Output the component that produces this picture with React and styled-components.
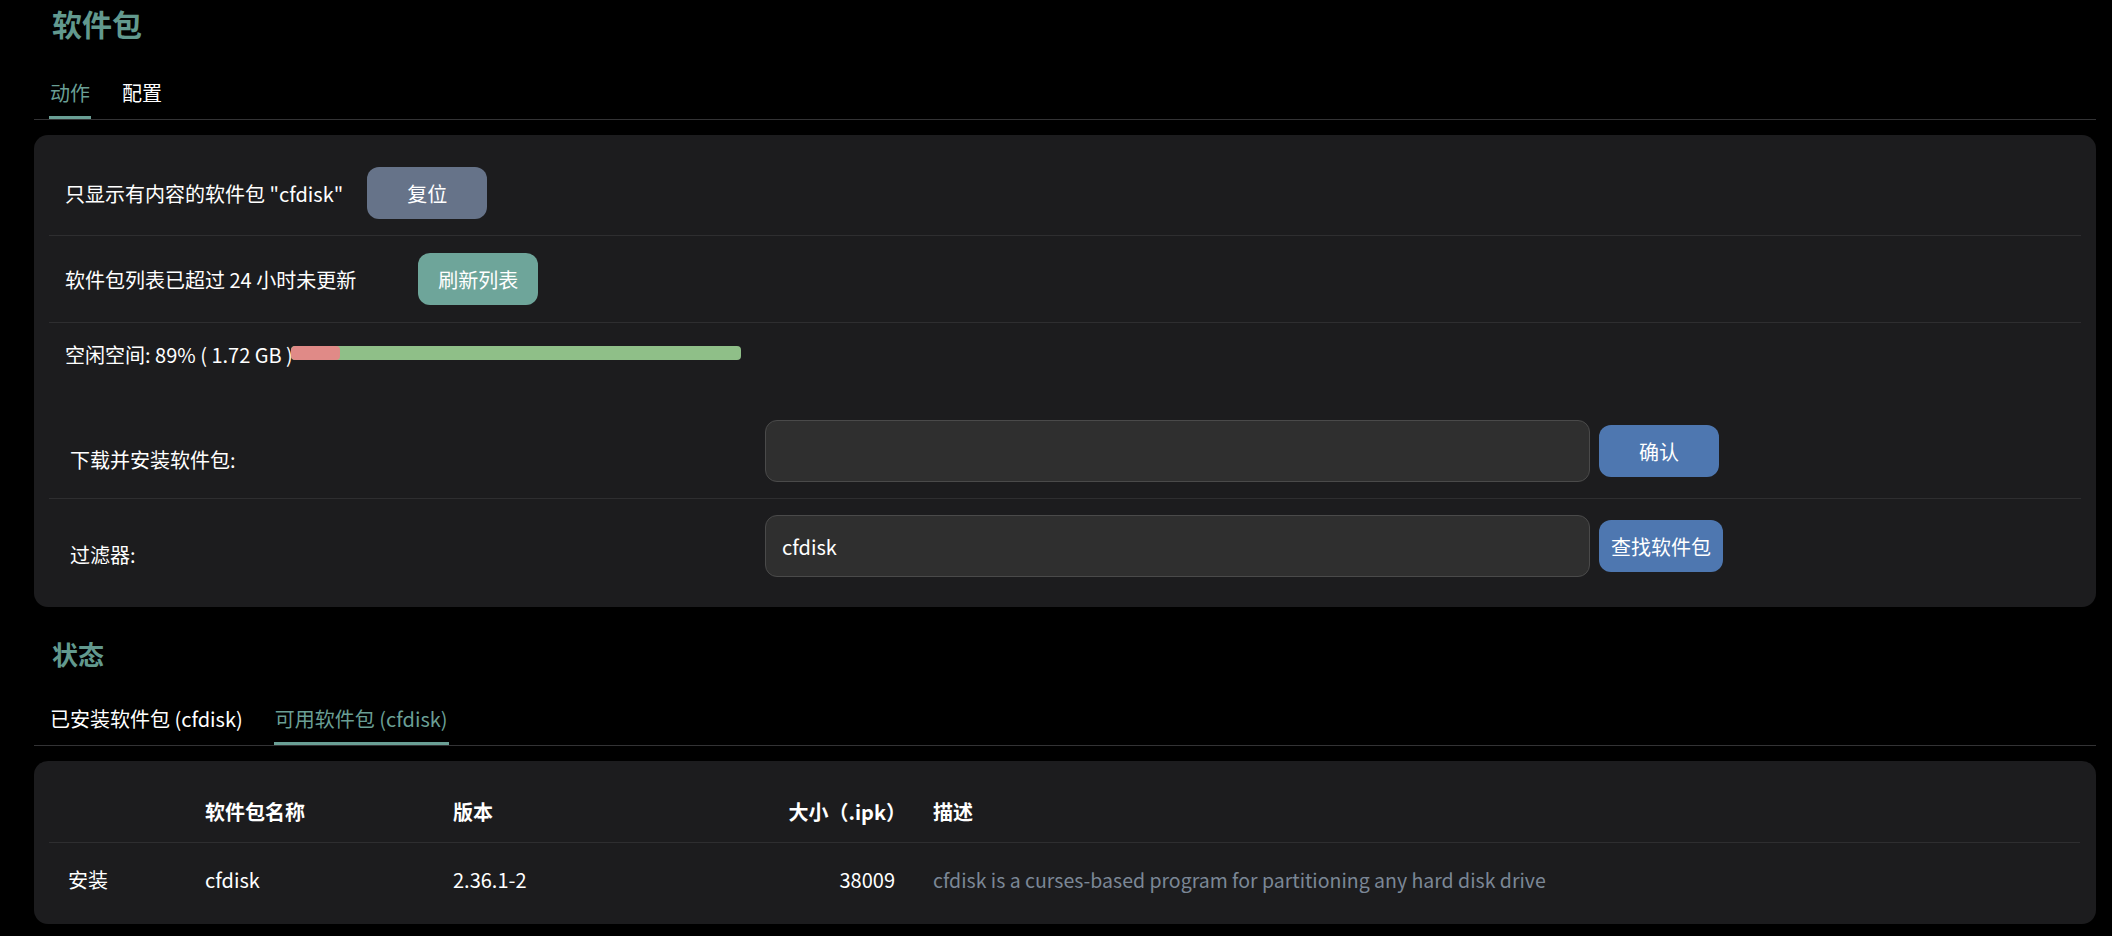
import React from 'react'
import styled, { createGlobalStyle } from 'styled-components'

const GlobalStyle = createGlobalStyle`
  html, body {
    margin: 0;
    background: #000;
  }
  body {
    font-family: "Noto Sans CJK SC", "Noto Sans", sans-serif;
    font-size: 20px;
    color: #fff;
  }
  * { box-sizing: border-box; }
`

const packages = [
  {
    action: '安装',
    name: 'cfdisk',
    version: '2.36.1-2',
    size: '38009',
    desc: 'cfdisk is a curses-based program for partitioning any hard disk drive',
  },
]

function App() {
  return (
    <Page>
      <GlobalStyle />
      <Heading $size={30}>软件包</Heading>
      <Tabs>
        <Tab $top={37} $active>动作</Tab>
        <Tab $top={37}>配置</Tab>
      </Tabs>

      <Card $pad="16px 15px 14px 15px">
        <ActionRow $h={84}>
          <span>只显示有内容的软件包 "cfdisk"</span>
          <Button $bg="#667389" $gap={24}>复位</Button>
        </ActionRow>
        <ActionRow $h={86}>
          <span>软件包列表已超过 24 小时未更新</span>
          <Button $bg="#6ea59a" $gap={62}>刷新列表</Button>
        </ActionRow>
        <ActionRow $h={63} $last>
          <span>空闲空间: 89% ( 1.72 GB )</span>
          <DiskBar>
            <DiskUsed style={{ width: '11%' }} />
          </DiskBar>
        </ActionRow>

        <FormRow $top={18} $line>
          <FieldLabel>下载并安装软件包:</FieldLabel>
          <TextInput defaultValue="" />
          <Button $bg="#4e77b0" $gap={9}>确认</Button>
        </FormRow>
        <FormRow>
          <FieldLabel>过滤器:</FieldLabel>
          <TextInput defaultValue="cfdisk" />
          <Button $bg="#4e77b0" $gap={9}>查找软件包</Button>
        </FormRow>
      </Card>

      <Heading $size={26} $top={29}>状态</Heading>
      <Tabs>
        <Tab $top={32}>已安装软件包 (cfdisk)</Tab>
        <Tab $top={32} $active>可用软件包 (cfdisk)</Tab>
      </Tabs>

      <Card $pad="19px 16px 9px 15px">
        <TableRow $h={62} $head>
          <Cell />
          <Cell>软件包名称</Cell>
          <Cell>版本</Cell>
          <Cell $right $trim>大小（.ipk）</Cell>
          <Cell $desc>描述</Cell>
        </TableRow>
        {packages.map((p) => (
          <TableRow key={p.name} $h={72}>
            <Cell>{p.action}</Cell>
            <Cell>{p.name}</Cell>
            <Cell>{p.version}</Cell>
            <Cell $right>{p.size}</Cell>
            <Cell $desc $muted>{p.desc}</Cell>
          </TableRow>
        ))}
      </Card>
    </Page>
  )
}

export default App

const Page = styled.div`
  padding: 5px 16px 11px 34px;
`

const Heading = styled.h2`
  margin: ${(p) => p.$top || 0}px 0 0;
  padding-left: 18px;
  font-size: ${(p) => p.$size}px;
  line-height: 36px;
  font-weight: 700;
  color: #62998e;
`

const Tabs = styled.ul`
  display: flex;
  list-style: none;
  margin: 0;
  padding: 0 0 0 15px;
  border-bottom: 1px solid #333335;
`

const Tab = styled.li`
  margin-right: 30px;
  padding: ${(p) => p.$top}px 1px 8px;
  font-size: 20px;
  line-height: 30px;
  color: ${(p) => (p.$active ? '#6a9f95' : '#fff')};
  border-bottom: 3px solid ${(p) => (p.$active ? '#6a9f95' : 'transparent')};
  cursor: pointer;
`

const Card = styled.div`
  margin-top: 15px;
  padding: ${(p) => p.$pad};
  background: #1c1c1e;
  border-radius: 14px;
`

const ActionRow = styled.div`
  display: flex;
  align-items: center;
  height: ${(p) => p.$h}px;
  padding: 0 16px;
  border-bottom: ${(p) => (p.$last ? 'none' : '1px solid #2e2e30')};
  box-sizing: content-box;
`

const Button = styled.button`
  justify-self: start;
  height: 52px;
  min-width: 120px;
  margin-left: ${(p) => p.$gap}px;
  padding: 0 12px;
  border: none;
  border-radius: 12px;
  background: ${(p) => p.$bg};
  color: #fff;
  font-family: inherit;
  font-size: 20px;
  cursor: pointer;
`

const DiskBar = styled.div`
  width: 450px;
  height: 14px;
  margin: 0 0 4px -2px;
  border-radius: 4px;
  background: #8fbf88;
  overflow: hidden;
`

const DiskUsed = styled.div`
  height: 100%;
  border-radius: 4px;
  background: #e08a87;
`

const FormRow = styled.div`
  display: grid;
  grid-template-columns: 716px 825px auto;
  align-items: center;
  margin-top: ${(p) => p.$top || 0}px;
  padding: 16px 0;
  border-bottom: ${(p) => (p.$line ? '1px solid #2e2e30' : 'none')};
`

const FieldLabel = styled.label`
  padding: 16px 0 0 21px;
`

const TextInput = styled.input`
  width: 100%;
  height: 62px;
  padding: 0 16px;
  background: #2f2f2f;
  border: 1px solid #4a4a4a;
  border-radius: 12px;
  color: #fff;
  font-family: inherit;
  font-size: 20px;
  outline: none;
`

const TableRow = styled.div`
  display: grid;
  grid-template-columns: 137px 248px 266px 214px 1fr;
  align-items: center;
  height: ${(p) => p.$h}px;
  font-weight: ${(p) => (p.$head ? 700 : 400)};
  border-bottom: ${(p) => (p.$head ? '1px solid #2e2e30' : 'none')};
  box-sizing: content-box;
`

const Cell = styled.div`
  padding: ${(p) => (p.$right ? `0 ${p.$trim ? 8 : 19}px 0 0` : '0 0 0 19px')};
  text-align: ${(p) => (p.$right ? 'right' : 'left')};
  color: ${(p) => (p.$muted ? '#7b8796' : '#fff')};
  font-size: ${(p) => (p.$muted ? '19.5px' : '20px')};
  white-space: nowrap;
`
